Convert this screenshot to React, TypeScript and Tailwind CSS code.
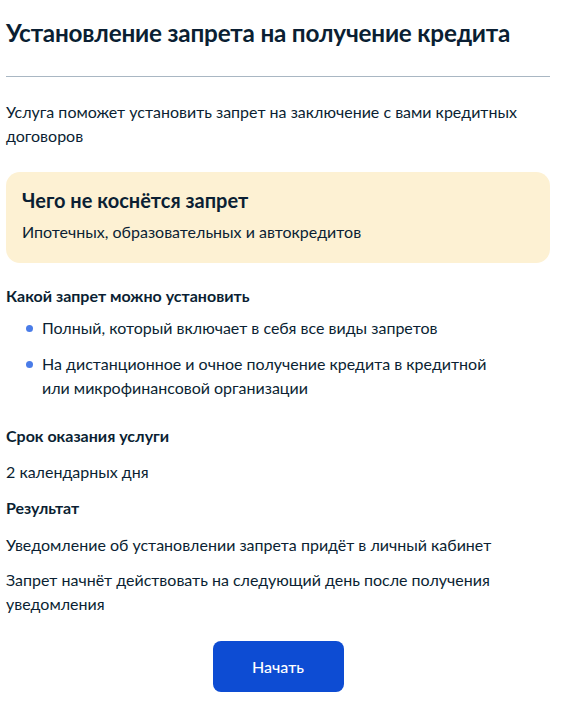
export default function App() {
  return (
    <div
      className="min-h-screen bg-white text-[#0b1f33] px-[6px] pt-[17px] pb-6"
      style={{ fontFamily: "Lato, 'Noto Sans', sans-serif" }}
    >
      <div className="w-[544px]">
        <h1 className="text-[24.3px] leading-[32px] font-bold tracking-[-0.2px]">
          Установление запрета на получение кредита
        </h1>
        <hr className="mt-[27px] border-0 h-px bg-[#a9b7c3]" />

        <p className="mt-[23px] text-[16px] leading-[24px]">
          Услуга поможет установить запрет на заключение с вами кредитных договоров
        </p>

        <div className="mt-[24px] rounded-[14px] bg-[#fdf1d3] px-[16px] pt-[16px] pb-[19px]">
          <p className="text-[20px] leading-[24px] font-bold">Чего не коснётся запрет</p>
          <p className="mt-[8px] text-[16px] leading-[24px]">
            Ипотечных, образовательных и автокредитов
          </p>
        </div>

        <h2 className="mt-[21px] text-[16px] leading-[24px] font-bold">
          Какой запрет можно установить
        </h2>
        <ul className="mt-[8px] flex flex-col gap-[12px] pl-[20px] pr-[48px]">
          <li className="flex gap-[9px] text-[16px] leading-[24px]">
            <span className="mt-[9px] w-[7px] h-[7px] rounded-full bg-[#4a7ce8] shrink-0" />
            <span>Полный, который включает в себя все виды запретов</span>
          </li>
          <li className="flex gap-[9px] text-[16px] leading-[24px]">
            <span className="mt-[9px] w-[7px] h-[7px] rounded-full bg-[#4a7ce8] shrink-0" />
            <span>
              На дистанционное и очное получение кредита в кредитной или микрофинансовой
              организации
            </span>
          </li>
        </ul>

        <h2 className="mt-[24px] text-[16px] leading-[24px] font-bold">Срок оказания услуги</h2>
        <p className="mt-[12px] text-[16px] leading-[24px]">2 календарных дня</p>

        <h2 className="mt-[12px] text-[16px] leading-[24px] font-bold">Результат</h2>
        <p className="mt-[13px] text-[16px] leading-[24px]">
          Уведомление об установлении запрета придёт в личный кабинет
        </p>
        <p className="mt-[11px] text-[16px] leading-[24px]">
          Запрет начнёт действовать на следующий день после получения уведомления
        </p>

        <div className="mt-[25px] flex justify-center">
          <button className="w-[131px] h-[51px] rounded-[8px] bg-[#0d4cd3] text-white text-[16px] font-medium">
            Начать
          </button>
        </div>
      </div>
    </div>
  );
}
